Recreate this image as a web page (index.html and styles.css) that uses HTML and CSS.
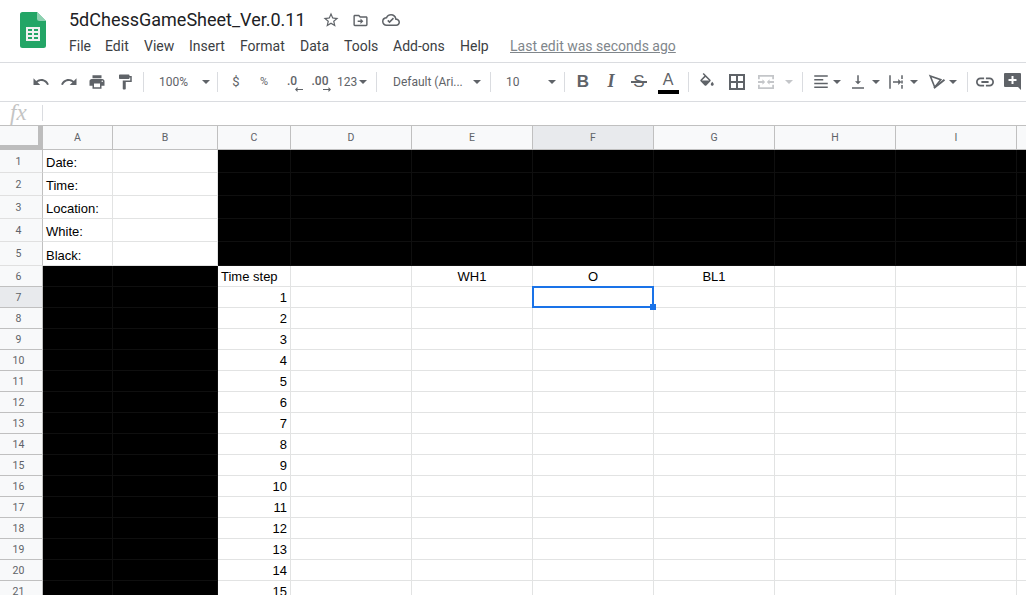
FILE: index.html
```html
<!DOCTYPE html>
<html lang="en">
<head>
<meta charset="utf-8">
<title>5dChessGameSheet_Ver.0.11</title>
<link rel="stylesheet" href="styles.css">
</head>
<body>
<header class="topbar">
  <svg class="logo" viewBox="0 0 26 36" aria-hidden="true">
    <path d="M2.5 0H17l9 9v24.5a2.500 2.500 0 0 1-2.500 2.500h-21A2.500 2.500 0 0 1 0 33.500v-31A2.500 2.500 0 0 1 2.500 0z" fill="#23a566"/>
    <path d="M17 0l9 9h-6.500A2.500 2.500 0 0 1 17 6.500z" fill="#8ed1b1"/>
    <path d="M6 15h14v14H6z" fill="#f1f1f1"/>
    <path d="M8 17h4v2H8zm6 0h4v2h-4zM8 21h4v2H8zm6 0h4v2h-4zM8 25h4v2H8zm6 0h4v2h-4z" fill="#23a566"/>
  </svg>
  <div class="titleblock">
    <div class="titlerow">
      <span class="doctitle">5dChessGameSheet_Ver.0.11</span>
      <svg class="ticon star" viewBox="0 0 24 24"><path d="M22 9.240l-7.190-.62L12 2 9.190 8.630 2 9.240l5.460 4.730L5.820 21 12 17.270 18.180 21l-1.640-7.030L22 9.240zM12 15.400l-3.760 2.270 1-4.280-3.320-2.880 4.380-.38L12 6.100l1.710 4.040 4.380.38-3.320 2.880 1 4.280L12 15.400z"/></svg>
      <svg class="ticon move" viewBox="0 0 24 24"><path d="M20 6h-8l-2-2H4c-1.100 0-2 .9-2 2v12c0 1.100.9 2 2 2h16c1.100 0 2-.9 2-2V8c0-1.100-.9-2-2-2zm0 12H4V6h5.170l2 2H20v10zm-8-4H8v-2h4V9l4 4-4 4v-3z"/></svg>
      <svg class="ticon cloud" viewBox="0 0 24 24"><path d="M19.350 10.040A7.490 7.490 0 0 0 12 4C9.110 4 6.600 5.640 5.350 8.040A5.994 5.994 0 0 0 0 14c0 3.310 2.690 6 6 6h13c2.760 0 5-2.240 5-5 0-2.640-2.050-4.780-4.650-4.960zM19 18H6c-2.210 0-4-1.790-4-4s1.790-4 4-4h.71A5.500 5.500 0 0 1 12 6c2.620 0 4.880 1.860 5.390 4.430l.3 1.500 1.530.11A2.980 2.980 0 0 1 22 15c0 1.650-1.350 3-3 3zm-9-1.800l-3-3 1.400-1.400 1.600 1.600 4.600-4.600 1.400 1.400-6 6z"/></svg>
    </div>
    <nav class="menubar">
      <span class="menu m-file">File</span>
      <span class="menu m-edit">Edit</span>
      <span class="menu m-view">View</span>
      <span class="menu m-insert">Insert</span>
      <span class="menu m-format">Format</span>
      <span class="menu m-data">Data</span>
      <span class="menu m-tools">Tools</span>
      <span class="menu m-addons">Add-ons</span>
      <span class="menu m-help">Help</span>
      <span class="lastedit">Last edit was seconds ago</span>
    </nav>
  </div>
</header>

<div class="toolbar">
  <span class="tb"><svg class="ic" viewBox="0 0 24 24"><path d="M12.500 8c-2.650 0-5.050.99-6.900 2.600L2 7v9h9l-3.620-3.620c1.390-1.160 3.160-1.880 5.120-1.880 3.540 0 6.550 2.310 7.600 5.500l2.370-.78C21.080 11.030 17.150 8 12.500 8z"/></svg></span>
  <span class="tb"><svg class="ic" viewBox="0 0 24 24"><path d="M18.400 10.600C16.550 8.990 14.150 8 11.500 8c-4.650 0-8.580 3.030-9.960 7.220L3.900 16c1.050-3.190 4.050-5.500 7.600-5.500 1.950 0 3.730.72 5.120 1.880L13 16h9V7l-3.600 3.600z"/></svg></span>
  <span class="tb"><svg class="ic" viewBox="0 0 24 24"><path d="M19 8H5c-1.660 0-3 1.340-3 3v6h4v4h12v-4h4v-6c0-1.660-1.340-3-3-3zm-3 11H8v-5h8v5zm3-7c-.55 0-1-.45-1-1s.45-1 1-1 1 .45 1 1-.45 1-1 1zm-1-9H6v4h12V3z"/></svg></span>
  <span class="tb"><svg class="ic" viewBox="0 0 24 24"><path d="M18 4V3c0-.55-.45-1-1-1H5c-.55 0-1 .45-1 1v4c0 .55.45 1 1 1h12c.55 0 1-.45 1-1V6h1v4H9v11c0 .55.45 1 1 1h2c.55 0 1-.45 1-1v-9h8V4h-3z"/></svg></span>
  <span class="sep s-a"></span>
  <span class="drop d-zoom"><span class="dtext">100%</span><i class="caret"></i></span>
  <span class="sep"></span>
  <span class="tb tb-first txt sm">$</span>
  <span class="tb txt xs">%</span>
  <span class="tb dec"><span class="dectext">.0</span><svg class="arrow" viewBox="0 0 8 5"><path d="M8 2H2.500V0L0 2.500 2.500 5V3H8z"/></svg></span>
  <span class="tb dec"><span class="dectext">.00</span><svg class="arrow" viewBox="0 0 8 5"><path d="M0 2h5.500V0L8 2.500 5.500 5V3H0z"/></svg></span>
  <span class="drop d-num"><span class="dtext num">123</span><i class="caret"></i></span>
  <span class="sep s-a"></span>
  <span class="drop d-font"><span class="dtext">Default (Ari...</span><i class="caret"></i></span>
  <span class="sep"></span>
  <span class="drop d-size"><span class="dtext">10</span><i class="caret"></i></span>
  <span class="sep"></span>
  <span class="tb tb-first fmt bold">B</span>
  <span class="tb fmt ital">I</span>
  <span class="tb fmt strike">S</span>
  <span class="tb colora"><span class="fmt-a">A</span><i class="colorbar"></i></span>
  <span class="sep s-b"></span>
  <span class="tb tb-first"><svg class="ic" viewBox="0 0 24 24"><path d="M16.560 8.940L7.620 0 6.210 1.410l2.380 2.380-5.150 5.150c-.59.59-.59 1.540 0 2.120l5.500 5.500c.29.29.68.44 1.060.44s.77-.15 1.060-.44l5.500-5.500c.59-.58.59-1.530 0-2.120zM5.210 10L10 5.210 14.790 10H5.210zM19 11.500s-2 2.170-2 3.500c0 1.100.9 2 2 2s2-.9 2-2c0-1.330-2-3.500-2-3.500z"/></svg></span>
  <span class="tb t-border"><svg class="ic sq" viewBox="0 0 16 16"><path fill-rule="evenodd" d="M0 0h16v16H0zM2 2v5h5V2zM9 2v5h5V2zM2 9v5h5V9zM9 9v5h5V9z"/></svg></span>
  <span class="tb t-merge"><svg class="ic off sq" viewBox="3 3 18 18"><path d="M3 4h18v2H3zM3 18h18v2H3zM3 6h2v3H3zM19 6h2v3h-2zM3 15h2v3H3zM19 15h2v3h-2zM3 11h5V9l3 3-3 3v-2H3zM21 11h-5V9l-3 3 3 3v-2h5z"/></svg></span>
  <span class="capbox c-merge"><i class="caret off"></i></span>
  <span class="sep s-a"></span>
  <span class="tb22 t-align"><svg class="ic" viewBox="0 0 24 24"><path d="M3 3h18v2H3zM3 8h12v2H3zM3 13h18v2H3zM3 18h18v2H3z"/></svg></span>
  <span class="capbox"><i class="caret"></i></span>
  <span class="tb22 t-valign"><svg class="ic" viewBox="0 0 24 24"><path d="M16 11h-3V3h-2v8H8l4 4 4-4zM4 19v2h16v-2H4z"/></svg></span>
  <span class="capbox c-tight"><i class="caret"></i></span>
  <span class="tb22 t-wrap"><svg class="ic" viewBox="0 0 24 24"><path d="M3 3h2v18H3zM19 3h2v5h-2zM19 10h2v4h-2zM19 16h2v5h-2zM8 11h7V8l4 4-4 4v-3H8z"/></svg></span>
  <span class="capbox c-tight"><i class="caret"></i></span>
  <span class="tb22 t-rotate"><svg class="ic" viewBox="0 0 24 24"><path d="M3 4l14 5-8 10z" fill="none" stroke="#5f6368" stroke-width="2.200"/><path d="M8 20L22 9" fill="none" stroke="#5f6368" stroke-width="2.600"/></svg></span>
  <span class="capbox"><i class="caret"></i></span>
  <span class="sep s-c"></span>
  <span class="tb22 t-link"><svg class="ic" viewBox="2 2 20 20"><path d="M3.900 12c0-1.710 1.390-3.100 3.100-3.100h4V7H7c-2.760 0-5 2.240-5 5s2.240 5 5 5h4v-1.900H7c-1.710 0-3.100-1.390-3.100-3.100zM8 13h8v-2H8v2zm9-6h-4v1.900h4c1.710 0 3.100 1.390 3.100 3.100s-1.390 3.100-3.100 3.100h-4V17h4c2.760 0 5-2.240 5-5s-2.240-5-5-5z"/></svg></span>
  <span class="tb22 t-comment"><svg class="ic big" viewBox="0 0 18 18"><path d="M1 0h15a1 1 0 0 1 1 1v16l-3-3H1a1 1 0 0 1-1-1V1a1 1 0 0 1 1-1zm6.500 3v3h-3v2h3v3h2V8h3V6h-3V3z" fill-rule="evenodd"/></svg></span>
</div>

<div class="formulabar">
  <span class="fx">fx</span>
  <span class="fxsep"></span>
</div>

<main class="sheet">
<table class="grid">
  <colgroup>
    <col class="w-rh"><col class="w-a"><col class="w-b"><col class="w-c"><col class="w-d"><col class="w-e"><col class="w-e"><col class="w-e"><col class="w-e"><col class="w-e"><col class="w-j">
  </colgroup>
  <thead>
    <tr class="hrow">
      <th class="corner"></th><th>A</th><th>B</th><th>C</th><th>D</th><th>E</th><th class="active">F</th><th>G</th><th>H</th><th>I</th><th></th>
    </tr>
  </thead>
  <tbody>
    <tr class="r23"><th class="rh lt">1</th><td>Date:</td><td></td><td class="k"></td><td class="k"></td><td class="k"></td><td class="k"></td><td class="k"></td><td class="k"></td><td class="k"></td><td class="k"></td></tr>
    <tr class="r23"><th class="rh lt">2</th><td>Time:</td><td></td><td class="k"></td><td class="k"></td><td class="k"></td><td class="k"></td><td class="k"></td><td class="k"></td><td class="k"></td><td class="k"></td></tr>
    <tr class="r23"><th class="rh lt">3</th><td>Location:</td><td></td><td class="k"></td><td class="k"></td><td class="k"></td><td class="k"></td><td class="k"></td><td class="k"></td><td class="k"></td><td class="k"></td></tr>
    <tr class="r23"><th class="rh lt">4</th><td>White:</td><td></td><td class="k"></td><td class="k"></td><td class="k"></td><td class="k"></td><td class="k"></td><td class="k"></td><td class="k"></td><td class="k"></td></tr>
    <tr class="r24"><th class="rh lt">5</th><td>Black:</td><td></td><td class="k"></td><td class="k"></td><td class="k"></td><td class="k"></td><td class="k"></td><td class="k"></td><td class="k"></td><td class="k"></td></tr>
    <tr><th class="rh">6</th><td class="k"></td><td class="k"></td><td>Time step</td><td></td><td class="c">WH1</td><td class="c">O</td><td class="c">BL1</td><td></td><td></td><td></td></tr>
    <tr><th class="rh active">7</th><td class="k"></td><td class="k"></td><td class="n">1</td><td></td><td></td><td class="selected"><span class="selbox"><i class="handle"></i></span></td><td></td><td></td><td></td><td></td></tr>
    <tr><th class="rh">8</th><td class="k"></td><td class="k"></td><td class="n">2</td><td></td><td></td><td></td><td></td><td></td><td></td><td></td></tr>
    <tr><th class="rh">9</th><td class="k"></td><td class="k"></td><td class="n">3</td><td></td><td></td><td></td><td></td><td></td><td></td><td></td></tr>
    <tr><th class="rh">10</th><td class="k"></td><td class="k"></td><td class="n">4</td><td></td><td></td><td></td><td></td><td></td><td></td><td></td></tr>
    <tr><th class="rh">11</th><td class="k"></td><td class="k"></td><td class="n">5</td><td></td><td></td><td></td><td></td><td></td><td></td><td></td></tr>
    <tr><th class="rh">12</th><td class="k"></td><td class="k"></td><td class="n">6</td><td></td><td></td><td></td><td></td><td></td><td></td><td></td></tr>
    <tr><th class="rh">13</th><td class="k"></td><td class="k"></td><td class="n">7</td><td></td><td></td><td></td><td></td><td></td><td></td><td></td></tr>
    <tr><th class="rh">14</th><td class="k"></td><td class="k"></td><td class="n">8</td><td></td><td></td><td></td><td></td><td></td><td></td><td></td></tr>
    <tr><th class="rh">15</th><td class="k"></td><td class="k"></td><td class="n">9</td><td></td><td></td><td></td><td></td><td></td><td></td><td></td></tr>
    <tr><th class="rh">16</th><td class="k"></td><td class="k"></td><td class="n">10</td><td></td><td></td><td></td><td></td><td></td><td></td><td></td></tr>
    <tr><th class="rh">17</th><td class="k"></td><td class="k"></td><td class="n">11</td><td></td><td></td><td></td><td></td><td></td><td></td><td></td></tr>
    <tr><th class="rh">18</th><td class="k"></td><td class="k"></td><td class="n">12</td><td></td><td></td><td></td><td></td><td></td><td></td><td></td></tr>
    <tr><th class="rh">19</th><td class="k"></td><td class="k"></td><td class="n">13</td><td></td><td></td><td></td><td></td><td></td><td></td><td></td></tr>
    <tr><th class="rh">20</th><td class="k"></td><td class="k"></td><td class="n">14</td><td></td><td></td><td></td><td></td><td></td><td></td><td></td></tr>
    <tr><th class="rh">21</th><td class="k"></td><td class="k"></td><td class="n">15</td><td></td><td></td><td></td><td></td><td></td><td></td><td></td></tr>
  </tbody>
</table>
</main>
</body>
</html>
```

FILE: styles.css
```css
* { box-sizing: border-box; }
html, body { margin: 0; height: 100%; overflow: hidden; background: #fff; }
body { width: 1026px; height: 595px; display: flex; flex-direction: column; font-family: Roboto, "Liberation Sans", sans-serif; color: #202124; }

/* Top bar */
.topbar { height: 63px; flex: none; display: flex; align-items: flex-start; padding: 12px 0 0 20px; border-bottom: 1px solid #dadce0; }
.logo { width: 26px; height: 36px; flex: none; }
.titleblock { margin-left: 23px; display: flex; flex-direction: column; margin-top: -4px; }
.titlerow { height: 24px; display: flex; align-items: center; }
.doctitle { font-size: 18px; line-height: 24px; width: 253px; white-space: nowrap; }
.ticon { width: 18px; height: 18px; fill: #5f6368; flex: none; }
.move { margin-left: 12px; width: 17px; height: 17px; }
.cloud { margin-left: 13px; }
.menubar { display: flex; align-items: center; height: 24px; margin-top: 2px; font-size: 14px; color: #3c4043; white-space: nowrap; }
.menu { display: block; }
.m-file { width: 36px; }
.m-edit { width: 39px; }
.m-view { width: 45px; }
.m-insert { width: 51px; }
.m-format { width: 60px; }
.m-data { width: 44px; }
.m-tools { width: 49px; }
.m-addons { width: 67px; }
.m-help { width: 50px; }
.lastedit { color: #80868b; text-decoration: underline; }

/* Toolbar */
.toolbar { height: 39px; flex: none; display: flex; align-items: center; padding-left: 27px; border-bottom: 1px solid #dadce0; color: #5f6368; white-space: nowrap; padding-bottom: 1px; }
.tb { width: 28px; height: 28px; flex: none; display: flex; align-items: center; justify-content: center; position: relative; }
.tb22 { width: 22px; height: 28px; flex: none; display: flex; align-items: center; justify-content: center; }
.ic { width: 18px; height: 18px; fill: #5f6368; display: block; }
.ic.sq { width: 16px; height: 16px; }
.ic.off { fill: #c4c6c9; }
.sep { width: 1px; height: 20px; background: #dadce0; flex: none; }
.s-a { margin-left: 4px; }
.s-b { margin-left: 5px; }
.s-c { margin-left: 9px; }
.tb-first { margin-left: 4px; }
.drop { display: flex; align-items: center; height: 28px; flex: none; font-size: 12px; position: relative; }
.dtext { display: block; }
.caret { display: block; width: 0; height: 0; border-left: 4px solid transparent; border-right: 4px solid transparent; border-top: 4px solid #5f6368; flex: none; }
.caret.off { border-top-color: #c4c6c9; }
.d-zoom { width: 73px; padding-left: 15px; }
.d-zoom .dtext { width: 43px; }
.d-num { width: 38px; padding-left: 3px; }
.d-num .dtext { width: 22px; }
.d-font { width: 113px; padding-left: 16px; }
.d-font .dtext { width: 80px; }
.d-size { width: 73px; padding-left: 15px; }
.d-size .dtext { width: 42px; }
.txt { font-size: 12px; }
.xs { font-size: 11px; }
.sm { font-size: 13px; }
.dec { font-size: 12px; align-items: flex-start; padding-top: 6px; font-weight: 500; }
.dectext { display: block; line-height: 14px; }
.arrow { position: absolute; right: 3px; bottom: 4px; width: 8px; height: 5px; fill: #5f6368; }
.fmt { font-size: 17px; font-family: "Liberation Sans", Arial, sans-serif; color: #5f6368; }
.bold { font-weight: 700; }
.ital { font-family: "Liberation Serif", serif; font-style: italic; font-weight: 700; font-size: 18px; }
.strike::after { content: ""; position: absolute; left: 6px; right: 6px; top: 13px; height: 2px; background: #5f6368; }
.colora { width: 30px; flex-direction: column; justify-content: flex-start; padding-top: 2px; }
.fmt-a { font-size: 16px; line-height: 19px; color: #5f6368; font-family: "Liberation Sans", Arial, sans-serif; }
.colorbar { display: block; width: 21px; height: 4px; background: #000; margin-top: 1px; }
.t-border { margin-left: 2px; }
.t-merge { margin-left: 1px; }
.capbox { width: 10px; height: 28px; flex: none; display: flex; align-items: center; justify-content: center; }
.c-merge { width: 18px; }
.c-tight { margin-left: 2px; }
.t-align { margin-left: 7px; }
.t-valign { margin-left: 5px; }
.t-wrap { margin-left: 4px; }
.t-rotate { margin-left: 7px; }
.t-link { margin-left: 6px; }
.t-comment { margin-left: 6px; }

/* Formula bar */
.formulabar { height: 24px; flex: none; display: flex; align-items: center; padding-bottom: 2px; border-bottom: 1px solid #c0c0c0; }
.fx { width: 42px; padding-left: 10px; font-family: "Liberation Serif", serif; font-style: italic; font-size: 23px; line-height: 20px; color: #c4c4c4; }
.fxsep { width: 1px; height: 16px; background: #dadce0; }

/* Sheet */
.sheet { flex: 1; overflow: hidden; min-height: 0; }
.grid { border-collapse: separate; border-spacing: 0; table-layout: fixed; width: 1090px; font-family: "Liberation Sans", Arial, sans-serif; font-size: 13px; color: #000; }
.w-rh { width: 43px; }
.w-a { width: 70px; }
.w-b { width: 105px; }
.w-c { width: 73px; }
.w-d { width: 121px; }
.w-e { width: 121px; }
.w-j { width: 73px; }
.grid tr { height: 21px; }
.grid tr.r23 { height: 23px; }
.grid tr.r24 { height: 24px; }
.grid tr.hrow { height: 24px; }
.grid th { font-family: Roboto, "Liberation Sans", sans-serif; font-weight: 400; font-size: 10px; color: #5f6368; background: #f8f9fa; padding: 0; border-right: 1px solid #c0c0c0; border-bottom: 1px solid #c0c0c0; text-align: center; }
.grid .hrow th { font-size: 10.500px; }
.grid th.corner { background: #f8f9fa; border-right: 5px solid #bdbdbd; border-bottom: 5px solid #bdbdbd; }
.grid th.rh { padding-right: 5px; font-size: 10.500px; }
.grid th.rh.lt { border-bottom-color: #e0e0e0; }
.grid th.active { background: #e8eaed; }
.grid td { padding: 0 3px 1px; border-right: 1px solid #e2e3e3; border-bottom: 1px solid #e2e3e3; vertical-align: bottom; line-height: 17px; white-space: nowrap; overflow: visible; }
.grid td.k { background: #000; border-right-color: #0f0f0f; border-bottom-color: #0f0f0f; }
.grid td.c { text-align: center; }
.grid td.n { text-align: right; }
.grid td.selected { position: relative; }
.selbox { position: absolute; left: -1px; top: -1px; right: -1px; bottom: -1px; border: 2px solid #1a73e8; display: block; }
.handle { position: absolute; right: -4px; bottom: -4px; width: 6px; height: 6px; background: #1a73e8; display: block; }
```
